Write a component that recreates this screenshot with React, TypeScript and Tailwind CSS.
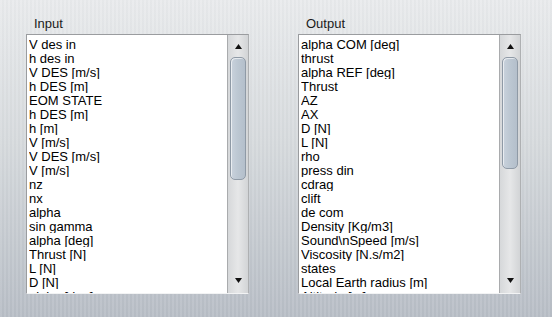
const inputs = [
  "V des in",
  "h des in",
  "V DES [m/s]",
  "h DES [m]",
  "EOM STATE",
  "h DES [m]",
  "h [m]",
  "V [m/s]",
  "V DES [m/s]",
  "V [m/s]",
  "nz",
  "nx",
  "alpha",
  "sin gamma",
  "alpha [deg]",
  "Thrust [N]",
  "L [N]",
  "D [N]",
  "alpha [deg]",
];

const outputs = [
  "alpha COM [deg]",
  "thrust",
  "alpha REF [deg]",
  "Thrust",
  "AZ",
  "AX",
  "D [N]",
  "L [N]",
  "rho",
  "press din",
  "cdrag",
  "clift",
  "de com",
  "Density [Kg/m3]",
  "Sound\\nSpeed [m/s]",
  "Viscosity [N.s/m2]",
  "states",
  "Local Earth radius [m]",
  "Altitude [m]",
];

function ScrollBar({ thumb }: { thumb: number }) {
  return (
    <div className="flex w-[21px] shrink-0 flex-col items-center border-l border-[#a9abad] bg-gradient-to-r from-[#d6d8da] via-[#e6e7e8] to-[#d2d4d6]">
      <div className="flex h-[22px] items-center justify-center pt-[1px]">
        <svg width="7" height="5" viewBox="0 0 7 5">
          <path d="M3.5 0 L7 5 L0 5 Z" fill="#111" />
        </svg>
      </div>
      <div
        className="w-[16px] rounded-[5px] border border-[#8f9aa6] bg-gradient-to-r from-[#c9d2dc] via-[#bcc7d2] to-[#b4bfcb] shadow-[inset_1px_1px_0_rgba(255,255,255,0.6)]"
        style={{ height: thumb }}
      />
      <div className="flex-1" />
      <div className="flex h-[22px] items-center justify-center pb-[3px]">
        <svg width="7" height="5" viewBox="0 0 7 5">
          <path d="M0 0 L7 0 L3.5 5 Z" fill="#111" />
        </svg>
      </div>
    </div>
  );
}

function ListPanel({
  label,
  items,
  thumb,
}: {
  label: string;
  items: string[];
  thumb: number;
}) {
  return (
    <div className="flex w-[223px] flex-col">
      <div className="h-[15px] pl-[8px] text-[13px] leading-[15px] text-[#1b1b1b]">
        {label}
      </div>
      <div className="mt-[3px] flex h-[260px] border border-t-[#9a9c9f] border-l-[#9a9c9f] border-r-[#aeb0b2] border-b-[#f2f3f4] bg-white">
        <div className="flex-1 overflow-hidden pl-[2px] pt-[2px]">
          {items.map((item, i) => (
            <div
              key={i}
              className="h-[14px] overflow-hidden whitespace-nowrap text-[13px] leading-[15px] text-black"
            >
              {item}
            </div>
          ))}
        </div>
        <ScrollBar thumb={thumb} />
      </div>
    </div>
  );
}

export default function App() {
  return (
    <div
      className="flex h-[317px] w-[552px] gap-[49px] bg-[repeating-linear-gradient(90deg,rgba(255,255,255,0.07)_0px,rgba(255,255,255,0.07)_2px,rgba(0,0,0,0.015)_2px,rgba(0,0,0,0.015)_4px),linear-gradient(180deg,#e9ebed_0%,#d6dadd_45%,#b8bec6_100%)] pl-[26px] pt-[16px]"
      style={{ fontFamily: '"Liberation Sans", Arial, sans-serif' }}
    >
      <ListPanel label="Input" items={inputs} thumb={123} />
      <ListPanel label="Output" items={outputs} thumb={112} />
    </div>
  );
}
